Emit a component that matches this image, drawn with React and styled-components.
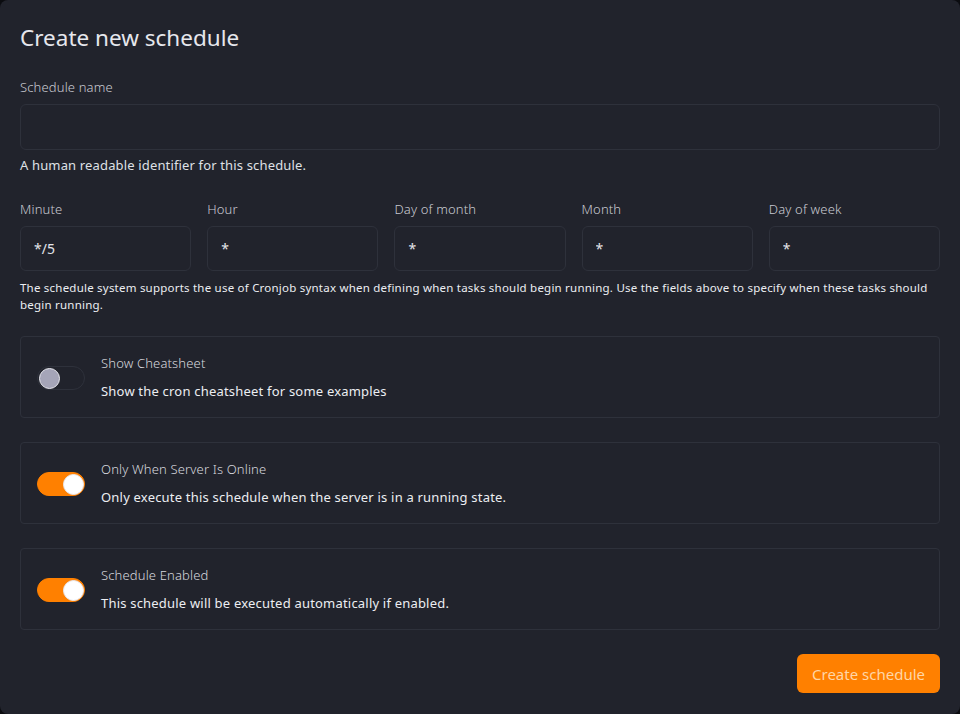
import React, { useState } from "react";
import styled, { createGlobalStyle } from "styled-components";

const Global = createGlobalStyle`
  html, body { margin: 0; padding: 0; background: #0b0c10; }
  body { font-family: "Noto Sans", "Open Sans", sans-serif; }
  * { box-sizing: border-box; }
`;

const Modal = styled.div`
  width: 960px;
  height: 714px;
  background: #21232c;
  border-radius: 8px;
  padding: 22px 20px 20px;
  display: flex;
  flex-direction: column;
  color: #e4e5ea;
`;

const Title = styled.h1`
  margin: 0 0 24px;
  font-size: 22.5px;
  font-weight: 400;
  line-height: 32px;
  color: #e6e7ec;
`;

const Label = styled.label`
  display: block;
  font-size: 13px;
  line-height: 18px;
  color: #c9cad2;
  margin-bottom: 8px;
  font-weight: 300;
  letter-spacing: 0.15px;
`;

const Input = styled.input`
  width: 100%;
  height: ${(p) => p.$h || 46}px;
  background: #21232c;
  border: 1px solid #2e313b;
  border-radius: 6px;
  color: #e4e5ea;
  font-family: inherit;
  font-size: 14px;
  padding: 0 13px;
  outline: none;
`;

const Help = styled.p`
  margin: 6px 0 0;
  font-size: 13px;
  line-height: 18px;
  color: #dfe0e6;
  letter-spacing: 0.15px;
`;

const CronGrid = styled.div`
  display: grid;
  grid-template-columns: repeat(5, 1fr);
  gap: 16px;
  margin-top: 26px;
`;

const CronHelp = styled.p`
  margin: 8px 0 0;
  font-size: 11.5px;
  line-height: 17px;
  color: #eceef2;
  letter-spacing: 0.22px;
`;

const Cards = styled.div`
  display: flex;
  flex-direction: column;
  gap: 24px;
  margin-top: 23px;
`;

const Card = styled.div`
  height: 82px;
  border: 1px solid #2e313b;
  border-radius: 4px;
  display: flex;
  align-items: center;
  padding: 0 16px;
  gap: 16px;
`;

const Track = styled.button`
  width: 48px;
  height: 24px;
  border-radius: 12px;
  border: 1px solid ${(p) => (p.$on ? "#ff8000" : "#2e313b")};
  background: ${(p) => (p.$on ? "#ff8000" : "transparent")};
  position: relative;
  padding: 0;
  cursor: pointer;
  flex-shrink: 0;
  margin-top: 1px;
`;

const Thumb = styled.span`
  position: absolute;
  top: 1px;
  left: ${(p) => (p.$on ? "25px" : "1px")};
  width: 21px;
  height: 21px;
  border-radius: 50%;
  background: ${(p) => (p.$on ? "#ffffff" : "#a5a5b8")};
  border: 1.5px solid #e8e8ee;
`;

const CardText = styled.div`
  display: flex;
  flex-direction: column;
  gap: 10px;
`;

const CardTitle = styled.div`
  font-size: 13px;
  line-height: 18px;
  font-weight: 300;
  color: #d6d7de;
  letter-spacing: 0.15px;
`;

const CardDesc = styled.div`
  font-size: 13px;
  line-height: 18px;
  color: #eceef2;
  letter-spacing: 0.2px;
`;

const Footer = styled.div`
  display: flex;
  justify-content: flex-end;
  margin-top: auto;
  padding-bottom: 1px;
`;

const Button = styled.button`
  background: #ff8000;
  color: #ffd6a6;
  border: none;
  border-radius: 6px;
  height: 39px;
  padding: 0 15px;
  font-family: inherit;
  font-size: 15px;
  cursor: pointer;
`;

const Toggle = ({ on, onClick }) => (
  <Track $on={on} onClick={onClick} type="button">
    <Thumb $on={on} />
  </Track>
);

const cron = [
  ["Minute", "*/5"],
  ["Hour", "*"],
  ["Day of month", "*"],
  ["Month", "*"],
  ["Day of week", "*"],
];

export default function App() {
  const [toggles, setToggles] = useState([false, true, true]);
  const flip = (i) => setToggles((t) => t.map((v, j) => (j === i ? !v : v)));
  const cards = [
    ["Show Cheatsheet", "Show the cron cheatsheet for some examples"],
    ["Only When Server Is Online", "Only execute this schedule when the server is in a running state."],
    ["Schedule Enabled", "This schedule will be executed automatically if enabled."],
  ];
  return (
    <>
      <Global />
      <Modal>
        <Title>Create new schedule</Title>
        <div>
          <Label>Schedule name</Label>
          <Input />
          <Help>A human readable identifier for this schedule.</Help>
        </div>
        <CronGrid>
          {cron.map(([l, v]) => (
            <div key={l}>
              <Label>{l}</Label>
              <Input $h={45} defaultValue={v} />
            </div>
          ))}
        </CronGrid>
        <CronHelp>
          The schedule system supports the use of Cronjob syntax when defining when tasks should begin running. Use the fields above to specify when these tasks should begin running.
        </CronHelp>
        <Cards>
          {cards.map(([t, d], i) => (
            <Card key={t}>
              <Toggle on={toggles[i]} onClick={() => flip(i)} />
              <CardText>
                <CardTitle>{t}</CardTitle>
                <CardDesc>{d}</CardDesc>
              </CardText>
            </Card>
          ))}
        </Cards>
        <Footer>
          <Button>Create schedule</Button>
        </Footer>
      </Modal>
    </>
  );
}
